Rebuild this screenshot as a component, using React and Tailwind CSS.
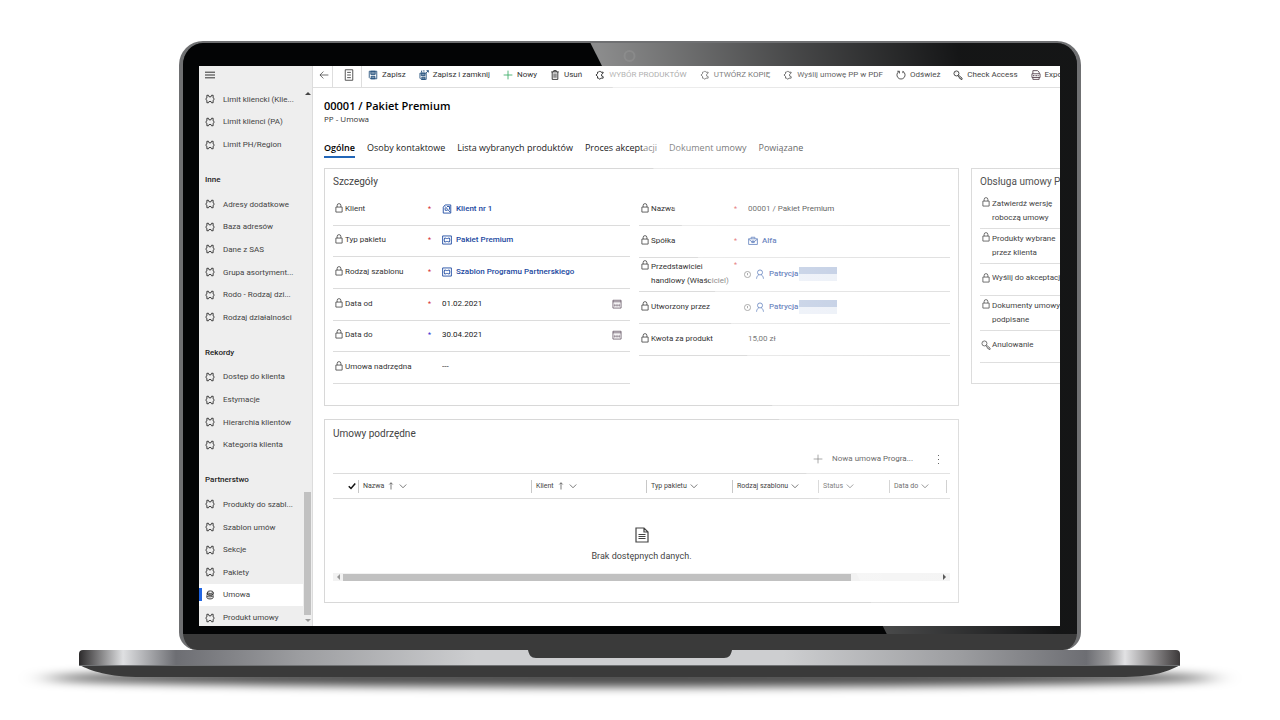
const PUZZLE = 'M3 2h2.500l1 2.500h3l1-2.500H13v4.300l2 1.800-2 1.800V14h-2.500l-1-2h-3l-1 2H3V9.900L1 8.100l2-1.800z'

const ICONS = {
  puzzle: <path d={PUZZLE} strokeLinejoin="round" />,
  piece: <path d="M13 5V3.500H9.500l-2-2-2 2H4V6L1.500 8 4 10v3h2l1.500 2 2-2H13v-2.500l-2.500-1v-2.500L13 5" strokeLinejoin="round" />,
  coins: (
    <>
      <ellipse cx="8.500" cy="3.500" rx="4.500" ry="2" />
      <path d="M4 3.500v3c0 2.600 9 2.600 9 0v-3M3 9c0 2.600 9 2.600 10 0M3 9v3c0 3 10 3 10 0V9M2 6l3 2h6l3-2" />
    </>
  ),
  back: <path d="M15 8H1.500M7 2.500 1.500 8 7 13.500" />,
  doc: <path d="M3 1h10v14H3zM5.500 4.500h5M5.500 8h5M5.500 11.500h5" />,
  save: (
    <>
      <path d="M2 2h12v12H4l-2-2z" />
      <path d="M4.500 2h7v5h-7zM5 10h6v4H5z" fill="currentColor" fillOpacity=".6" />
    </>
  ),
  saveClose: (
    <>
      <path d="M1.500 5h10v10h-8l-2-2zM6 1.500h3M12 1h3v3M11 5l4-4M4 1v3" />
      <path d="M3.500 5h6v4h-6zM4.500 11.500h5V15h-5z" fill="currentColor" fillOpacity=".6" />
    </>
  ),
  plus: <path d="M8 1v14M1 8h14" />,
  trash: <path d="M2 3h12M6 3V1h4v2M3.500 3v12h9V3M6.500 5.500v7M9.500 5.500v7" />,
  refresh: <path d="M5 2.200A6.500 6.500 0 1 0 11 2.200M5.500 5.500V2H2M11 5V1.800" />,
  key: (
    <>
      <circle cx="5.500" cy="5.500" r="4" />
      <path d="m8.500 8 6 5v2h-2l-1-2h-1.500v-1.500L7.500 9.500M4.500 4.500h.5" />
    </>
  ),
  export: <path d="M3 6V1h7.500L13 3.500V6M1.500 6h13v6h-13zM3 12v3h10v-3M4 8v2M6.500 8v2M9 8v2M11.500 8v2" />,
  lock: <path d="M3 6.500h10v8H3zM5 6.500V4a3 3 0 0 1 6 0v2.500" />,
  contract: <path d="M2 5l3-3.500h9v13H2zM5 4l8 9M5 6v4h4M8 4h4v5" />,
  box: (
    <>
      <path d="M1 1.500h14v13H1z" />
      <path d="M4 5h2.500c0 1.200 3 1.200 3 0H12v2c1.500 0 1.500 2 0 2v2H9.500c0-1.200-3-1.200-3 0H4V9C2.500 9 2.500 7 4 7z" />
    </>
  ),
  briefcase: <path d="M1 4.500h14v9H1zM5 4.500V2h6v2.500M1 5l5 4h4l5-4M6 8h4v2.500H6z" />,
  person: <path d="M8 1.500a4 4 0 1 1 0 8 4 4 0 0 1 0-8M2.500 15.500c0-3 2-5.200 3.500-6.500M13.500 15.500c0-3-2-5.200-3.500-6.500" />,
  clock: <path d="M8 1a7 7 0 1 1 0 14A7 7 0 0 1 8 1M8 4.500V9h1" />,
  calendar: (
    <>
      <path d="M1.500 2h13v12.500h-13zM1.500 4.500h13" />
      <path d="M4.500 7.500v5M8 7.500v5M11.500 7.500v5M3 10h10" strokeWidth=".8" />
    </>
  ),
  up: <path d="M8 15V1.500M4.500 5 8 1.500 11.500 5" />,
  chevron: <path d="m1.500 5 6.500 6.500L14.500 5" />,
  file: <path d="M2 1h8l4 4v10H2zM10 1v4h4M4.500 7.500h7M4.500 9.500h7M4.500 11.500h7" />,
  menu: <path d="M0 3.500h16M0 8h16M0 12.500h16" />,
}

const NAV = [
  { items: ['Limit kliencki (Klie...', 'Limit klienci (PA)', 'Limit PH/Region'] },
  {
    title: 'Inne',
    items: ['Adresy dodatkowe', 'Baza adresów', 'Dane z SAS', 'Grupa asortyment...', 'Rodo - Rodzaj dzi...', 'Rodzaj działalności'],
  },
  { title: 'Rekordy', items: ['Dostęp do klienta', 'Estymacje', 'Hierarchia klientów', 'Kategoria klienta'] },
  { title: 'Partnerstwo', items: ['Produkty do szabl...', 'Szablon umów', 'Sekcje', 'Pakiety', 'Umowa', 'Produkt umowy'] },
]

const COMMANDS = [
  { icon: 'save', label: 'Zapisz', tone: 'text-[#24507c]' },
  { icon: 'saveClose', label: 'Zapisz i zamknij', tone: 'text-[#24507c]' },
  { icon: 'plus', label: 'Nowy', tone: 'text-[#3fae6a]' },
  { icon: 'trash', label: 'Usuń' },
  { icon: 'piece', label: 'WYBÓR PRODUKTÓW', muted: true },
  { icon: 'piece', label: 'UTWÓRZ KOPIĘ' },
  { icon: 'piece', label: 'Wyślij umowę PP w PDF' },
  { icon: 'refresh', label: 'Odśwież' },
  { icon: 'key', label: 'Check Access' },
  { icon: 'export', label: 'Export', tone: 'text-[#4a3340]' },
]

const TABS = ['Ogólne', 'Osoby kontaktowe', 'Lista wybranych produktów', 'Proces akceptacji', 'Dokument umowy', 'Powiązane']

const LEFT_FIELDS = [
  { id: 'klient', label: 'Klient', required: true, link: 'Klient nr 1', icon: 'contract' },
  { id: 'typ', label: 'Typ pakietu', required: true, link: 'Pakiet Premium', icon: 'box' },
  { id: 'szablon', label: 'Rodzaj szablonu', required: true, link: 'Szablon Programu Partnerskiego', icon: 'box' },
  { id: 'od', label: 'Data od', required: true, value: '01.02.2021', date: true },
  { id: 'do', label: 'Data do', recommended: true, value: '30.04.2021', date: true },
  { id: 'nadrzedna', label: 'Umowa nadrzędna', value: '---' },
]

const RIGHT_FIELDS = [
  { id: 'nazwa', label: 'Nazwa', required: true, value: '00001 / Pakiet Premium', height: 'h-8' },
  { id: 'spolka', label: 'Spółka', required: true, link: 'Alfa', icon: 'briefcase', height: 'h-8' },
  { id: 'wlasciciel', label: 'Przedstawiciel\nhandlowy (Właściciel)', required: true, person: 'Patrycja', height: 'h-[34px]' },
  { id: 'utworzony', label: 'Utworzony przez', person: 'Patrycja', height: 'h-8' },
  { id: 'kwota', label: 'Kwota za produkt', value: '15,00 zł', height: 'h-8' },
]

const PROCESS = [
  { label: 'Zatwierdź wersję\nroboczą umowy', icon: 'lock', height: 'h-[35px]' },
  { label: 'Produkty wybrane\nprzez klienta', icon: 'lock', height: 'h-[35px]' },
  { label: 'Wyślij do akceptacji', icon: 'lock', height: 'h-8' },
  { label: 'Dokumenty umowy\npodpisane', icon: 'lock', height: 'h-[35px]' },
  { label: 'Anulowanie', icon: 'key', height: 'h-8' },
]

const COLUMNS = [
  { label: 'Nazwa', width: 'w-[173px]', sorted: true },
  { label: 'Klient', width: 'w-[115px]', sorted: true },
  { label: 'Typ pakietu', width: 'w-[86px]' },
  { label: 'Rodzaj szablonu', width: 'w-[86px]' },
  { label: 'Status', width: 'w-[71px]' },
  { label: 'Data do', width: 'w-[57px]' },
]

function Icon({ name, className = 'size-[10px]', stroke = 1.4 }) {
  return (
    <svg viewBox="0 0 16 16" className={`shrink-0 ${className}`} fill="none" stroke="currentColor" strokeWidth={stroke} aria-hidden="true">
      {ICONS[name]}
    </svg>
  )
}

function Sidebar() {
  return (
    <aside className="flex w-[114px] shrink-0 flex-col border-r border-[#dcdcdc] bg-[#eeeeee]">
      <button aria-label="Menu" className="flex h-[22px] shrink-0 items-center px-[6px] pb-1 text-[#333]">
        <Icon name="menu" stroke={1.6} />
      </button>
      <div className="flex min-h-0 flex-1">
        <nav className="-mb-[3px] flex min-w-0 flex-1 flex-col">
          {NAV.map((group, i) => (
            <div key={i} className="contents">
              {group.title && <h3 className="flex h-[37px] shrink-0 items-end px-[6px] pb-[7px] font-medium text-[#222]">{group.title}</h3>}
              {group.items.map((item) => (
                <a
                  key={item}
                  href="#"
                  className={`flex min-h-0 flex-1 items-center gap-2 whitespace-nowrap text-[#444] ${item === 'Umowa' ? 'bg-white' : ''}`}
                >
                  <span className={`-mr-[5px] h-[13px] w-[3px] ${item === 'Umowa' ? 'bg-[#2266e3]' : ''}`} />
                  <Icon name={item === 'Umowa' ? 'coins' : 'puzzle'} className="size-[10px] text-[#333]" stroke={1.5} />
                  <span className="pt-px">{item}</span>
                </a>
              ))}
            </div>
          ))}
        </nav>
        <div className="flex w-[9px] shrink-0 flex-col items-center py-1">
          <span className="border-x-[3px] border-b-[3px] border-x-transparent border-b-[#444]" />
          <span className="mt-auto h-[123px] w-[7px] bg-[#c1c1c1]" />
          <span className="mt-1 border-x-[3px] border-t-[3px] border-x-transparent border-t-[#999]" />
        </div>
      </div>
    </aside>
  )
}

function CommandBar() {
  return (
    <div className="flex h-[22px] shrink-0 items-stretch border-b border-[#dedede] text-[#333]">
      <button aria-label="Wstecz" className="flex w-5 shrink-0 items-center justify-end border-r border-[#dedede] pr-[3px] pb-1">
        <Icon name="back" stroke={1.1} />
      </button>
      <button aria-label="Formularz" className="flex w-[29px] shrink-0 items-center justify-center border-r border-[#dedede] pb-1 pl-1">
        <Icon name="doc" className="size-[12px]" stroke={1.1} />
      </button>
      <div className="flex items-center gap-[13px] pb-1 pl-[6px]">
        {COMMANDS.map((c) => (
          <button key={c.label} className={`flex shrink-0 items-center gap-1 whitespace-nowrap ${c.muted ? 'text-[#666]' : ''}`}>
            <Icon name={c.icon} className={`size-[10px] ${c.tone || 'text-[#222]'}`} />
            {c.label}
          </button>
        ))}
      </div>
    </div>
  )
}

function Label({ icon = 'lock', htmlFor, children }) {
  return (
    <>
      <Icon name={icon} className="mb-[2px] -ml-px size-[10px] text-[#444]" stroke={1.3} />
      <label htmlFor={htmlFor} className="whitespace-pre leading-[14px] text-[#333]">
        {children}
      </label>
    </>
  )
}

function Field({ field, height = '' }) {
  const twoLines = field.label.includes('\n')
  return (
    <div className={`flex items-center border-b border-[#dcdcdc] pb-px ${height}`}>
      <div className={`flex w-[95px] shrink-0 gap-px pl-[2px] ${twoLines ? 'items-start' : 'items-center'}`}>
        <Label htmlFor={field.id}>{field.label}</Label>
      </div>
      <span className={`w-[14px] shrink-0 text-[7px] leading-[10px] ${twoLines ? 'self-start pt-[2px]' : ''} ${field.recommended ? 'text-[#2a2ad0]' : 'text-[#d42a2a]'}`}>
        {(field.required || field.recommended) && '*'}
      </span>
      {field.link && (
        <a id={field.id} href="#" className="flex items-center gap-1 font-medium whitespace-nowrap text-[#1a48a0]">
          <Icon name={field.icon} />
          {field.link}
        </a>
      )}
      {field.person && (
        <a id={field.id} href="#" className="-ml-1 flex items-center gap-1 font-medium text-[#1a48a0]">
          <Icon name="clock" className="size-[7px] text-[#444]" stroke={1.6} />
          <Icon name="person" />
          {field.person}
          <span className="-ml-[3px] h-[14px] w-[38px] bg-linear-to-b from-[#b4c3de] from-50% to-[#e8edf6] to-50%" />
        </a>
      )}
      {field.value && <input id={field.id} readOnly defaultValue={field.value} className="min-w-0 flex-1 text-[#222] outline-none" />}
      {field.date && (
        <button aria-label={`Kalendarz: ${field.label}`} className="mr-2 text-[#5a4a5a]">
          <Icon name="calendar" stroke={1.2} />
        </button>
      )}
    </div>
  )
}

function Details() {
  return (
    <section className="h-[238px] border border-[#d8d8d8] px-2">
      <h2 className="flex h-[25px] items-center text-[10px] text-[#444]">Szczegóły</h2>
      <div className="flex gap-[9px]">
        <div className="grid h-[190px] min-w-0 flex-[297] grid-rows-6">
          {LEFT_FIELDS.map((f) => (
            <Field key={f.id} field={f} />
          ))}
        </div>
        <div className="min-w-0 flex-[311]">
          {RIGHT_FIELDS.map((f) => (
            <Field key={f.id} field={f} height={f.height} />
          ))}
        </div>
      </div>
    </section>
  )
}

function SubContracts() {
  return (
    <section className="mt-[13px] h-[184px] border border-[#d8d8d8] px-2">
      <h2 className="flex h-[26px] items-center text-[10px] text-[#444]">Umowy podrzędne</h2>
      <div className="flex h-[27px] items-center justify-end gap-6 pr-[10px] pb-px text-[#333]">
        <button className="flex items-center gap-[9px]">
          <Icon name="plus" stroke={1} />
          Nowa umowa Progra...
        </button>
        <button aria-label="Więcej" className="flex flex-col gap-[3px] px-[1px]">
          <span className="size-px bg-[#444]" />
          <span className="size-px bg-[#444]" />
          <span className="size-px bg-[#444]" />
        </button>
      </div>
      <table className="w-full table-fixed border-y border-[#dcdcdc] text-[7px] text-[#444]">
        <thead>
          <tr className="h-[25px]">
            <th className="w-[25px] p-0">
              <svg viewBox="0 0 16 16" className="mr-[2px] ml-auto size-[8px]" fill="none" stroke="#111" strokeWidth="3" role="img" aria-label="Zaznacz">
                <path d="m1.500 8.500 4.500 4.500L14.500 3" />
              </svg>
            </th>
            {COLUMNS.map((c) => (
              <th key={c.label} className={`p-0 font-normal ${c.width}`}>
                <span className="flex h-[13px] items-center gap-[3px] border-l border-[#c8c8c8] pl-1 whitespace-nowrap">
                  {c.label}
                  {c.sorted && <Icon name="up" className="mr-px size-[8px]" />}
                  <Icon name="chevron" className="size-[8px]" />
                </span>
              </th>
            ))}
            <th className="p-0">
              <span className="block h-[13px] border-l border-[#c8c8c8]" />
            </th>
          </tr>
        </thead>
      </table>
      <div className="flex h-[74px] flex-col items-center justify-end gap-[7px] pb-[10px] text-[9px] text-[#444]">
        <Icon name="file" className="size-[16px]" stroke={1.2} />
        Brak dostępnych danych.
      </div>
      <div className="flex h-2 items-center bg-[#f2f2f2] px-1">
        <span className="border-y-[3px] border-r-[3px] border-y-transparent border-r-[#999]" />
        <span className="ml-[3px] h-[7px] w-5/6 bg-[#c1c1c1]" />
        <span className="ml-auto border-y-[3px] border-l-[3px] border-y-transparent border-l-[#333]" />
      </div>
    </section>
  )
}

function ProcessPanel() {
  return (
    <section className="h-[216px] w-[89px] shrink-0 overflow-hidden border border-r-0 border-[#d8d8d8] pl-2">
      <h2 className="flex h-[25px] items-center text-[10px] whitespace-nowrap text-[#444]">Obsługa umowy PP</h2>
      {PROCESS.map((p) => (
        <div key={p.label} className={`flex gap-px border-b border-[#dcdcdc] pl-px ${p.height} ${p.label.includes('\n') ? 'items-start pt-[3px]' : 'items-center pb-1'}`}>
          <Icon name={p.icon} className="size-[10px] text-[#444]" stroke={1.3} />
          <span className="whitespace-pre leading-[14px] text-[#333]">{p.label}</span>
        </div>
      ))}
    </section>
  )
}

function Screen() {
  return (
    <div className="flex min-h-0 flex-1 overflow-hidden bg-white text-[8px]">
      <Sidebar />
      <main className="flex min-w-0 flex-1 flex-col overflow-hidden">
        <CommandBar />
        <div className="min-h-0 flex-1 pl-[11px]">
          <div className="font-['Open_Sans','Noto_Sans',sans-serif]">
            <h1 className="pt-[10px] text-[11px] leading-[16px] font-semibold text-black">00001 / Pakiet Premium</h1>
            <p className="leading-[10px] text-[#333]">PP - Umowa</p>
            <div role="tablist" className="mt-[17px] flex h-[17px] items-start gap-3 text-[9px] text-[#222]">
              {TABS.map((t, i) => (
                <button key={t} role="tab" aria-selected={i === 0} className={`h-[17px] shrink-0 pb-1 whitespace-nowrap ${i === 0 ? 'border-b-2 border-[#2266b8] font-semibold text-black' : 'border-b-2 border-transparent'}`}>
                  {t}
                </button>
              ))}
            </div>
          </div>
          <div className="mt-[10px] flex items-start gap-3">
            <div className="min-w-0 flex-1">
              <Details />
              <SubContracts />
            </div>
            <ProcessPanel />
          </div>
        </div>
      </main>
    </div>
  )
}

// glass reflection running across the bezel and the screen
function Reflection() {
  return (
    <svg viewBox="0 0 893 591" preserveAspectRatio="none" className="pointer-events-none absolute inset-0 size-full" aria-hidden="true">
      <defs>
        <linearGradient id="shine" gradientUnits="userSpaceOnUse" x1="417" y1="12" x2="767" y2="-46">
          <stop offset="0" stopColor="#fff" stopOpacity=".54" />
          <stop offset=".54" stopColor="#fff" stopOpacity=".27" />
          <stop offset="1" stopColor="#fff" stopOpacity=".07" />
        </linearGradient>
      </defs>
      <path d="M407 0h486v591H703z" fill="url(#shine)" />
      <circle cx="446" cy="13" r="5" fill="none" stroke="#fff" strokeOpacity=".08" strokeWidth="2" />
    </svg>
  )
}

function Base() {
  return (
    <div className="h-[70px] shrink-0">
      <svg viewBox="0 0 1280 70" preserveAspectRatio="none" className="size-full" aria-hidden="true">
        <defs>
          <linearGradient id="body">
            <stop offset="0" stopColor="#2c2a2b" />
            <stop offset=".04" stopColor="#dfe0e2" />
            <stop offset=".088" stopColor="#6d6e73" />
            <stop offset=".2" stopColor="#9c9da0" />
            <stop offset=".36" stopColor="#cdced0" />
            <stop offset=".64" stopColor="#cdced0" />
            <stop offset=".8" stopColor="#9c9da0" />
            <stop offset=".915" stopColor="#6d6e73" />
            <stop offset=".935" stopColor="#9b9b9d" />
            <stop offset=".95" stopColor="#e2e2e4" />
            <stop offset=".99" stopColor="#5d5a5b" />
            <stop offset="1" stopColor="#3c393a" />
          </linearGradient>
          <filter id="soft" x="-10%" y="-100%" width="120%" height="300%">
            <feGaussianBlur stdDeviation="14 5" />
          </filter>
        </defs>
        <ellipse cx="630" cy="28" rx="585" ry="9" fill="#000" fillOpacity=".7" filter="url(#soft)" />
        <path d="M79 15h1101c-14 8-30 12-60 12H142c-35 0-50-6-63-12z" fill="#3a3a3a" />
        <path d="M79 4q0-4 4-4h1093q4 0 4 4v12H79z" fill="url(#body)" />
        <path d="M79 15.500h1101" stroke="#707274" />
        <path d="M528 0h204c-1 5-3 8-8 8H536c-5 0-7-3-8-8z" fill="#3a3a3a" />
      </svg>
    </div>
  )
}

export default function App() {
  return (
    <div className="flex h-screen flex-col overflow-hidden bg-white pt-[41px] font-['Roboto','Noto_Sans',sans-serif]">
      <div className="mr-[199px] ml-[179px] flex min-h-0 flex-1 flex-col overflow-hidden rounded-t-[24px] rounded-b-[18px] border-4 border-t-2 border-b-0 border-[#6f7072] bg-[#3a3a3a]">
        <div className="relative flex min-h-0 flex-1 flex-col bg-[#030405] pt-[23px] pr-[17px] pb-2 pl-4">
          <Screen />
          <Reflection />
        </div>
        <div className="h-4 shrink-0" />
      </div>
      <Base />
    </div>
  )
}
